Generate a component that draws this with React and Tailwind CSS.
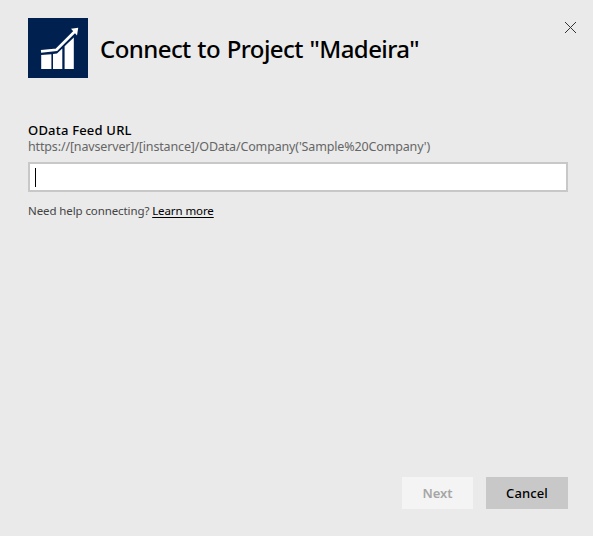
import React from "react";

function GrowthLogo() {
  return (
    <svg width="60" height="60" viewBox="0 0 60 60" className="shrink-0 bg-[#00204f]">
      <g fill="#fff">
        <path d="M13.2 37 L23.4 36.2 V51 H13.2Z" />
        <path d="M25 36 L29 35.6 L34.3 30.6 V51 H25Z" />
        <path d="M36.6 28.2 L45.8 19.4 V51 H36.6Z" />
        <path d="M43 10.8 L50.2 9.8 L49 17.4Z" />
      </g>
      <path d="M13 33.4 L28.5 31.8 L47 13.2" fill="none" stroke="#fff" strokeWidth="2.7" />
    </svg>
  );
}

function CloseButton() {
  return (
    <button aria-label="Close" className="mt-1 mr-px h-[11px] w-[11px] shrink-0">
      <svg width="11" height="11" viewBox="0 0 11 11" className="block">
        <path d="M0 0 L11 11 M11 0 L0 11" stroke="#333" strokeWidth="1" />
      </svg>
    </button>
  );
}

export default function App() {
  return (
    <main className="flex h-[536px] w-[593px] flex-col bg-[#eaeaea] pl-7 pr-[16px] pt-[18px] font-['Noto_Sans','Open_Sans',sans-serif] text-black">
      <header className="flex h-[60px] items-start">
        <GrowthLogo />
        <h1 className="ml-3 mt-[13px] grow whitespace-nowrap text-[24px] font-medium leading-[36px] tracking-[-0.58px] [word-spacing:1px]">
          Connect to Project "Madeira"
        </h1>
        <CloseButton />
      </header>
      <section className="mr-[9px] mt-[43px] flex flex-col items-start whitespace-nowrap">
        <label className="text-[13px] font-medium leading-[18px] tracking-[0.2px]">OData Feed URL</label>
        <p className="text-[12.5px] leading-[15px] tracking-[-0.15px] text-[#666]">
          https://[navserver]/[instance]/OData/Company('Sample%20Company')
        </p>
        <div className="mt-2 flex h-[30px] w-full items-center border-2 border-[#c8c8c8] bg-white pl-[5px]">
          <span className="h-[19px] w-px bg-black" />
        </div>
        <p className="mt-[10px] text-[11.5px] leading-[18px] tracking-[-0.1px] text-[#444]">
          Need help connecting? <a className="text-black underline underline-offset-2">Learn more</a>
        </p>
      </section>
      <footer className="mb-[27px] mr-[9px] mt-auto flex justify-end gap-[13px] text-[13px]">
        <button className="h-8 w-[71px] bg-[#f4f4f4] pt-px font-semibold text-[#a6a6a6]">Next</button>
        <button className="h-8 w-[82px] bg-[#c8c8c8] pt-px font-medium tracking-[0.1px]">Cancel</button>
      </footer>
    </main>
  );
}
